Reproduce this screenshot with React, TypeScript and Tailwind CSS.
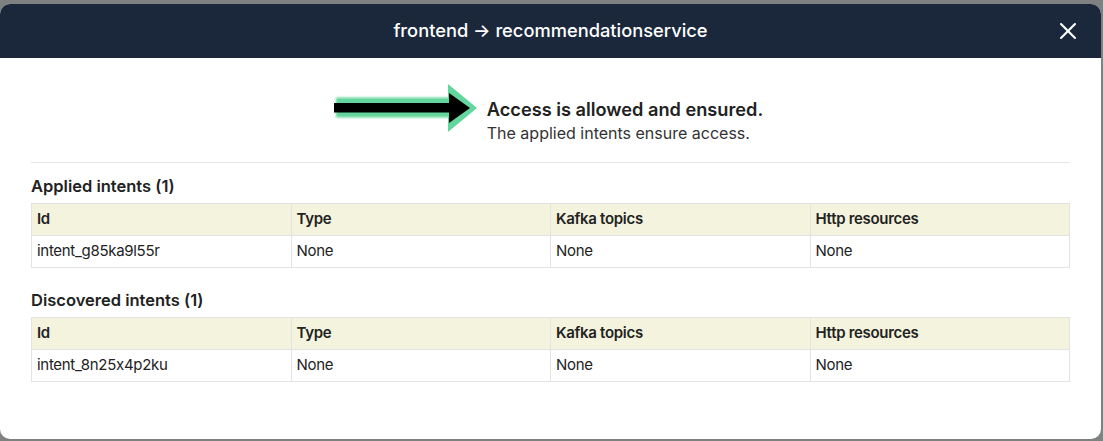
import { X } from "lucide-react";

const font = "font-['Inter','Noto_Sans',sans-serif] [font-feature-settings:'calt'_0]";

type Intent = { id: string; type: string; kafka: string; http: string };

const applied: Intent[] = [{ id: "intent_g85ka9l55r", type: "None", kafka: "None", http: "None" }];
const discovered: Intent[] = [{ id: "intent_8n25x4p2ku", type: "None", kafka: "None", http: "None" }];

function AccessArrow() {
  return (
    <svg width="150" height="56" viewBox="0 0 150 56" className="shrink-0">
      <defs>
        <filter id="glow" x="-10%" y="-50%" width="120%" height="200%">
          <feGaussianBlur stdDeviation="1.2" />
        </filter>
      </defs>
      <g fill="#62d69c">
        <rect x="5" y="17.5" width="116" height="20" filter="url(#glow)" />
        <polygon points="117,4 146,28 117,52" />
      </g>
      <g fill="#000">
        <rect x="3" y="23" width="118" height="9.5" />
        <polygon points="118,13 139,28 118,43" />
      </g>
    </svg>
  );
}

function IntentsTable({ title, rows }: { title: string; rows: Intent[] }) {
  return (
    <div>
      <h3 className="text-[16.5px] leading-6 font-semibold text-[#222] mb-[5px]">{title}</h3>
      <table className="w-full table-fixed border-collapse text-[15px] tracking-[-0.02em] text-[#222]">
        <thead>
          <tr className="bg-[#f4f4de]">
            {["Id", "Type", "Kafka topics", "Http resources"].map((h) => (
              <th key={h} className="h-8 px-[5px] text-left font-semibold border border-[#e3e3e3]">
                {h}
              </th>
            ))}
          </tr>
        </thead>
        <tbody>
          {rows.map((r) => (
            <tr key={r.id}>
              <td className="h-8 px-[5px] border border-[#e3e3e3]">{r.id}</td>
              <td className="h-8 px-[5px] border border-[#e3e3e3]">{r.type}</td>
              <td className="h-8 px-[5px] border border-[#e3e3e3]">{r.kafka}</td>
              <td className="h-8 px-[5px] border border-[#e3e3e3]">{r.http}</td>
            </tr>
          ))}
        </tbody>
      </table>
    </div>
  );
}

export default function App() {
  return (
    <div className={`h-[441px] w-[1103px] overflow-hidden bg-[#7f8180] ${font}`}>
      <div className="mt-[4px] w-[1101px] h-[435px] rounded-[10px] overflow-hidden bg-white flex flex-col">
        {/* Header */}
        <div className="relative h-[54px] shrink-0 bg-[#1b283b] flex items-center justify-center">
          <h2 className="text-white text-[18.3px] font-medium">frontend → recommendationservice</h2>
          <button className="absolute right-[19px] top-1/2 -translate-y-1/2 text-white">
            <X size={28} strokeWidth={1.8} />
          </button>
        </div>

        {/* Body */}
        <div className="px-[31px]">
          <div className="flex items-start justify-center gap-[6px] pt-[22px] pb-[17px] pr-[7px] border-b border-[#e6e6e6]">
            <AccessArrow />
            <div className="mt-[17px]">
              <p className="text-[18.2px] leading-6 font-semibold text-[#222]">Access is allowed and ensured.</p>
              <p className="text-[16px] leading-6 text-[#333]">The applied intents ensure access.</p>
            </div>
          </div>
          <div className="pt-[11px] flex flex-col gap-[20px]">
            <IntentsTable title="Applied intents (1)" rows={applied} />
            <IntentsTable title="Discovered intents (1)" rows={discovered} />
          </div>
        </div>
      </div>
    </div>
  );
}
